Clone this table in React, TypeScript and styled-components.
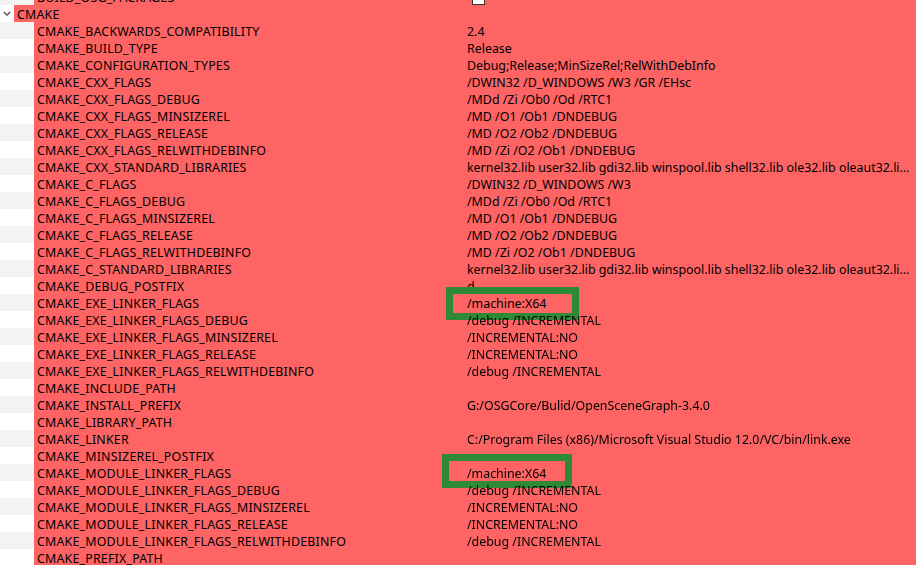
import React, { FC } from 'react';
import styled, { createGlobalStyle } from 'styled-components';

const GlobalStyle = createGlobalStyle`
	html, body {
		margin: 0;
		padding: 0;
		background: #ffffff;
		overflow: hidden;
	}
	body {
		font-family: 'Noto Sans', 'Open Sans', sans-serif;
		font-size: 12.4px;
		color: #000000;
	}
`;

type Entry = { name: string; value?: string; highlight?: 'a' | 'b' };

const ENTRIES: Entry[] = [
	{ name: 'CMAKE_BACKWARDS_COMPATIBILITY', value: '2.4' },
	{ name: 'CMAKE_BUILD_TYPE', value: 'Release' },
	{ name: 'CMAKE_CONFIGURATION_TYPES', value: 'Debug;Release;MinSizeRel;RelWithDebInfo' },
	{ name: 'CMAKE_CXX_FLAGS', value: '/DWIN32 /D_WINDOWS /W3 /GR /EHsc' },
	{ name: 'CMAKE_CXX_FLAGS_DEBUG', value: '/MDd /Zi /Ob0 /Od /RTC1' },
	{ name: 'CMAKE_CXX_FLAGS_MINSIZEREL', value: '/MD /O1 /Ob1 /DNDEBUG' },
	{ name: 'CMAKE_CXX_FLAGS_RELEASE', value: '/MD /O2 /Ob2 /DNDEBUG' },
	{ name: 'CMAKE_CXX_FLAGS_RELWITHDEBINFO', value: '/MD /Zi /O2 /Ob1 /DNDEBUG' },
	{
		name: 'CMAKE_CXX_STANDARD_LIBRARIES',
		value: 'kernel32.lib user32.lib gdi32.lib winspool.lib shell32.lib ole32.lib oleaut32.lib uuid.lib comdlg32.lib advapi32.lib',
	},
	{ name: 'CMAKE_C_FLAGS', value: '/DWIN32 /D_WINDOWS /W3' },
	{ name: 'CMAKE_C_FLAGS_DEBUG', value: '/MDd /Zi /Ob0 /Od /RTC1' },
	{ name: 'CMAKE_C_FLAGS_MINSIZEREL', value: '/MD /O1 /Ob1 /DNDEBUG' },
	{ name: 'CMAKE_C_FLAGS_RELEASE', value: '/MD /O2 /Ob2 /DNDEBUG' },
	{ name: 'CMAKE_C_FLAGS_RELWITHDEBINFO', value: '/MD /Zi /O2 /Ob1 /DNDEBUG' },
	{
		name: 'CMAKE_C_STANDARD_LIBRARIES',
		value: 'kernel32.lib user32.lib gdi32.lib winspool.lib shell32.lib ole32.lib oleaut32.lib uuid.lib comdlg32.lib advapi32.lib',
	},
	{ name: 'CMAKE_DEBUG_POSTFIX', value: 'd' },
	{ name: 'CMAKE_EXE_LINKER_FLAGS', value: '/machine:X64', highlight: 'a' },
	{ name: 'CMAKE_EXE_LINKER_FLAGS_DEBUG', value: '/debug /INCREMENTAL' },
	{ name: 'CMAKE_EXE_LINKER_FLAGS_MINSIZEREL', value: '/INCREMENTAL:NO' },
	{ name: 'CMAKE_EXE_LINKER_FLAGS_RELEASE', value: '/INCREMENTAL:NO' },
	{ name: 'CMAKE_EXE_LINKER_FLAGS_RELWITHDEBINFO', value: '/debug /INCREMENTAL' },
	{ name: 'CMAKE_INCLUDE_PATH' },
	{ name: 'CMAKE_INSTALL_PREFIX', value: 'G:/OSGCore/Bulid/OpenSceneGraph-3.4.0' },
	{ name: 'CMAKE_LIBRARY_PATH' },
	{ name: 'CMAKE_LINKER', value: 'C:/Program Files (x86)/Microsoft Visual Studio 12.0/VC/bin/link.exe' },
	{ name: 'CMAKE_MINSIZEREL_POSTFIX' },
	{ name: 'CMAKE_MODULE_LINKER_FLAGS', value: '/machine:X64', highlight: 'b' },
	{ name: 'CMAKE_MODULE_LINKER_FLAGS_DEBUG', value: '/debug /INCREMENTAL' },
	{ name: 'CMAKE_MODULE_LINKER_FLAGS_MINSIZEREL', value: '/INCREMENTAL:NO' },
	{ name: 'CMAKE_MODULE_LINKER_FLAGS_RELEASE', value: '/INCREMENTAL:NO' },
	{ name: 'CMAKE_MODULE_LINKER_FLAGS_RELWITHDEBINFO', value: '/debug /INCREMENTAL' },
	{ name: 'CMAKE_PREFIX_PATH' },
];

const App: FC = () => (
	<>
		<GlobalStyle />
		<Viewport>
			<Tree>
				<Row $shaded>
					<Gutter $width={34} />
					<Cell>
						<Name>BUILD_OSG_PACKAGES</Name>
						<Value>
							<CheckBox />
						</Value>
					</Cell>
				</Row>
				<Row>
					<Gutter $width={14}>
						<svg width="8" height="6" viewBox="0 0 8 6">
							<path d="M0.8 1 L4 4.2 L7.2 1" fill="none" stroke="#4a4a4a" strokeWidth="1.3" />
						</svg>
					</Gutter>
					<Cell>
						<GroupName>CMAKE</GroupName>
					</Cell>
				</Row>
				{ENTRIES.map((e, i) => (
					<Row key={e.name} $shaded={i % 2 === 0}>
						<Gutter $width={34} />
						<Cell>
							<Name>{e.name}</Name>
							<Value>
								{e.value}
								{e.highlight && <Highlight $variant={e.highlight} />}
							</Value>
						</Cell>
					</Row>
				))}
			</Tree>
		</Viewport>
	</>
);

const Viewport = styled.div`
	width: 916px;
	height: 565px;
	overflow: hidden;
`;

const Tree = styled.div`
	display: flex;
	flex-direction: column;
	margin-top: -12px;
`;

const Row = styled.div<{ $shaded?: boolean }>`
	display: flex;
	height: 17px;
	background: ${(p) => (p.$shaded ? '#f3f3f3' : '#ffffff')};
`;

const Gutter = styled.div<{ $width: number }>`
	flex: 0 0 ${(p) => p.$width}px;
	display: flex;
	align-items: center;
	padding-left: 3px;
	box-sizing: border-box;
`;

const Cell = styled.div`
	flex: 1;
	display: flex;
	align-items: flex-start;
	min-width: 0;
	box-sizing: border-box;
	padding-top: 2px;
	background: #ff6464;
	line-height: 15px;
`;

const GroupName = styled.div`
	padding-left: 3px;
	letter-spacing: 0.2px;
	white-space: nowrap;
`;

const Name = styled.div`
	flex: 0 0 433px;
	box-sizing: border-box;
	padding-left: 3px;
	letter-spacing: 0.2px;
	white-space: nowrap;
	overflow: hidden;
`;

const Value = styled.div`
	position: relative;
	flex: 1;
	min-width: 0;
	padding-right: 6px;
	white-space: nowrap;
	overflow: hidden;
	text-overflow: ellipsis;
`;

const CheckBox = styled.span`
	display: inline-block;
	margin-left: 5px;
	width: 11px;
	height: 11px;
	border: 1px solid #333333;
	background: #ffffff;
	vertical-align: middle;
`;

const Highlight = styled.span<{ $variant: 'a' | 'b' }>`
	position: fixed;
	box-sizing: border-box;
	border: 7px solid #2f8a35;
	pointer-events: none;
	left: ${(p) => (p.$variant === 'a' ? 446 : 442)}px;
	top: ${(p) => (p.$variant === 'a' ? 287 : 454)}px;
	width: ${(p) => (p.$variant === 'a' ? 133 : 130)}px;
	height: ${(p) => (p.$variant === 'a' ? 33 : 34)}px;
`;

export default App;
